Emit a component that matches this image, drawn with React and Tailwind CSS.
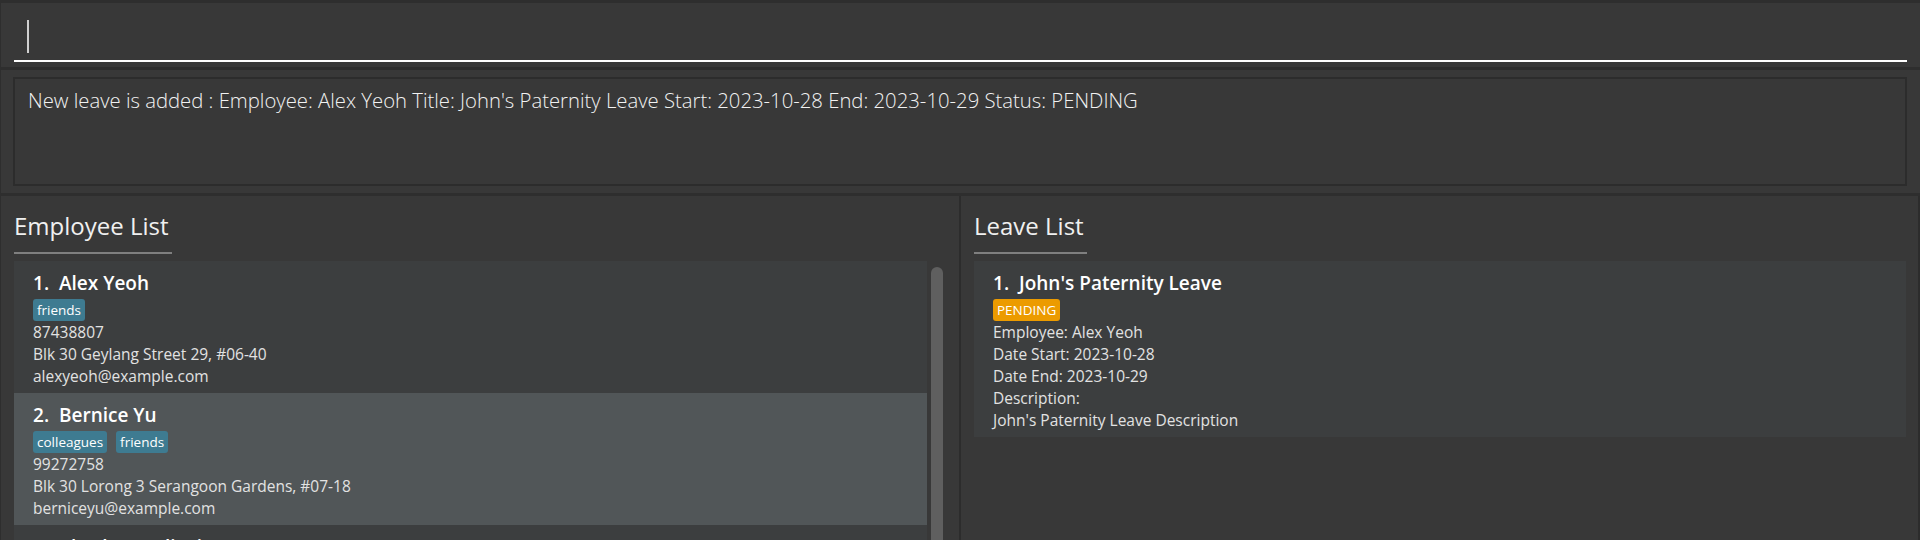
import React from "react";

const employees = [
  {
    name: "Alex Yeoh",
    tags: ["friends"],
    phone: "87438807",
    address: "Blk 30 Geylang Street 29, #06-40",
    email: "alexyeoh@example.com",
  },
  {
    name: "Bernice Yu",
    tags: ["colleagues", "friends"],
    phone: "99272758",
    address: "Blk 30 Lorong 3 Serangoon Gardens, #07-18",
    email: "berniceyu@example.com",
  },
  {
    name: "Charlotte Oliveiro",
    tags: ["neighbours"],
    phone: "93210283",
    address: "Blk 11 Ang Mo Kio Street 74, #11-04",
    email: "charlotte@example.com",
  },
];

const leaves = [
  {
    title: "John's Paternity Leave",
    status: "PENDING",
    employee: "Alex Yeoh",
    start: "2023-10-28",
    end: "2023-10-29",
    description: "John's Paternity Leave Description",
  },
];

const PaneTitle = ({ children }) => (
  <div className="pt-[14px]">
    <span className="inline-block border-b-2 border-[#7f7f7f] pb-[10px] pr-[3px] text-[24px] font-medium leading-[32px] text-[#f0f0f0]">
      {children}
    </span>
  </div>
);

const Tag = ({ children, className }) => (
  <span
    className={
      "h-[22px] rounded-[3px] px-[4px] text-[13.5px] leading-[22px] text-white " +
      className
    }
  >
    {children}
  </span>
);

const EmployeeCard = ({ index, employee }) => (
  <div
    className={
      "px-[19px] pt-[10px] pb-[6px] " +
      (index % 2 === 0 ? "bg-[#3c3e3f]" : "bg-[#515658]")
    }
  >
    <div className="h-[24px] whitespace-pre text-[19px] font-semibold leading-[24px] text-white">
      {index + 1}.{"  "}
      {employee.name}
    </div>
    <div className="mt-[4px] flex gap-[9px]">
      {employee.tags.map((t) => (
        <Tag key={t} className="bg-[#3e7b91]">
          {t}
        </Tag>
      ))}
    </div>
    <div className="text-[15.5px] leading-[22px] text-[#e2e2e2]">
      <div>{employee.phone}</div>
      <div>{employee.address}</div>
      <div>{employee.email}</div>
    </div>
  </div>
);

const LeaveCard = ({ index, leave }) => (
  <div className="bg-[#3c3e3f] px-[19px] pt-[10px] pb-[6px]">
    <div className="h-[24px] whitespace-pre text-[19px] font-semibold leading-[24px] text-white">
      {index + 1}.{"  "}
      {leave.title}
    </div>
    <div className="mt-[4px] flex">
      <Tag className="bg-[#ec9b00]">{leave.status}</Tag>
    </div>
    <div className="text-[15.5px] leading-[22px] text-[#e2e2e2]">
      <div>Employee: {leave.employee}</div>
      <div>Date Start: {leave.start}</div>
      <div>Date End: {leave.end}</div>
      <div>Description:</div>
      <div>{leave.description}</div>
    </div>
  </div>
);

export default function App() {
  return (
    <div className="flex h-[540px] w-[1920px] flex-col overflow-hidden border-t-[3px] border-l border-[#2e2e2e] bg-[#383838] font-['Open_Sans',sans-serif]">
      {/* command box */}
      <div className="flex h-[64px] flex-col justify-end px-[13px] pb-[5px]">
        <div className="flex h-[44px] items-end border-b-2 border-white pb-[7px] pl-[13px]">
          <span className="h-[33px] w-[2px] bg-[#d0d0d0]" />
        </div>
      </div>
      <div className="h-[3px] bg-[#2e2e2e]" />

      {/* result display */}
      <div className="h-[123px] py-[7px] pl-[12px] pr-[13px]">
        <div className="h-full border-2 border-[#2c2c2c] px-[13px] pt-[7px] text-[20.3px] font-light leading-[28px] text-[#f2f2f2]">
          New leave is added : Employee: Alex Yeoh Title: John's Paternity Leave
          Start: 2023-10-28 End: 2023-10-29 Status: PENDING
        </div>
      </div>
      <div className="h-[3px] bg-[#2e2e2e]" />

      {/* lists */}
      <div className="flex min-h-0 flex-1">
        <div className="flex w-[960px] flex-col border-r-2 border-[#2c2c2c] pl-[13px] pr-[12px]">
          <PaneTitle>Employee List</PaneTitle>
          <div className="mt-[7px] flex min-h-0 flex-1 overflow-hidden">
            <div className="flex-1">
              {employees.map((e, i) => (
                <EmployeeCard key={e.name} index={i} employee={e} />
              ))}
            </div>
            <div className="w-[20px] shrink-0">
              <div className="mx-auto mt-[6px] h-[400px] w-[12px] rounded-full bg-[#5f5f5f]" />
            </div>
          </div>
        </div>

        <div className="flex flex-1 flex-col border-r-2 border-[#2c2c2c] pl-[13px] pr-[12px]">
          <PaneTitle>Leave List</PaneTitle>
          <div className="mt-[7px]">
            {leaves.map((l, i) => (
              <LeaveCard key={l.title} index={i} leave={l} />
            ))}
          </div>
        </div>
      </div>
    </div>
  );
}
